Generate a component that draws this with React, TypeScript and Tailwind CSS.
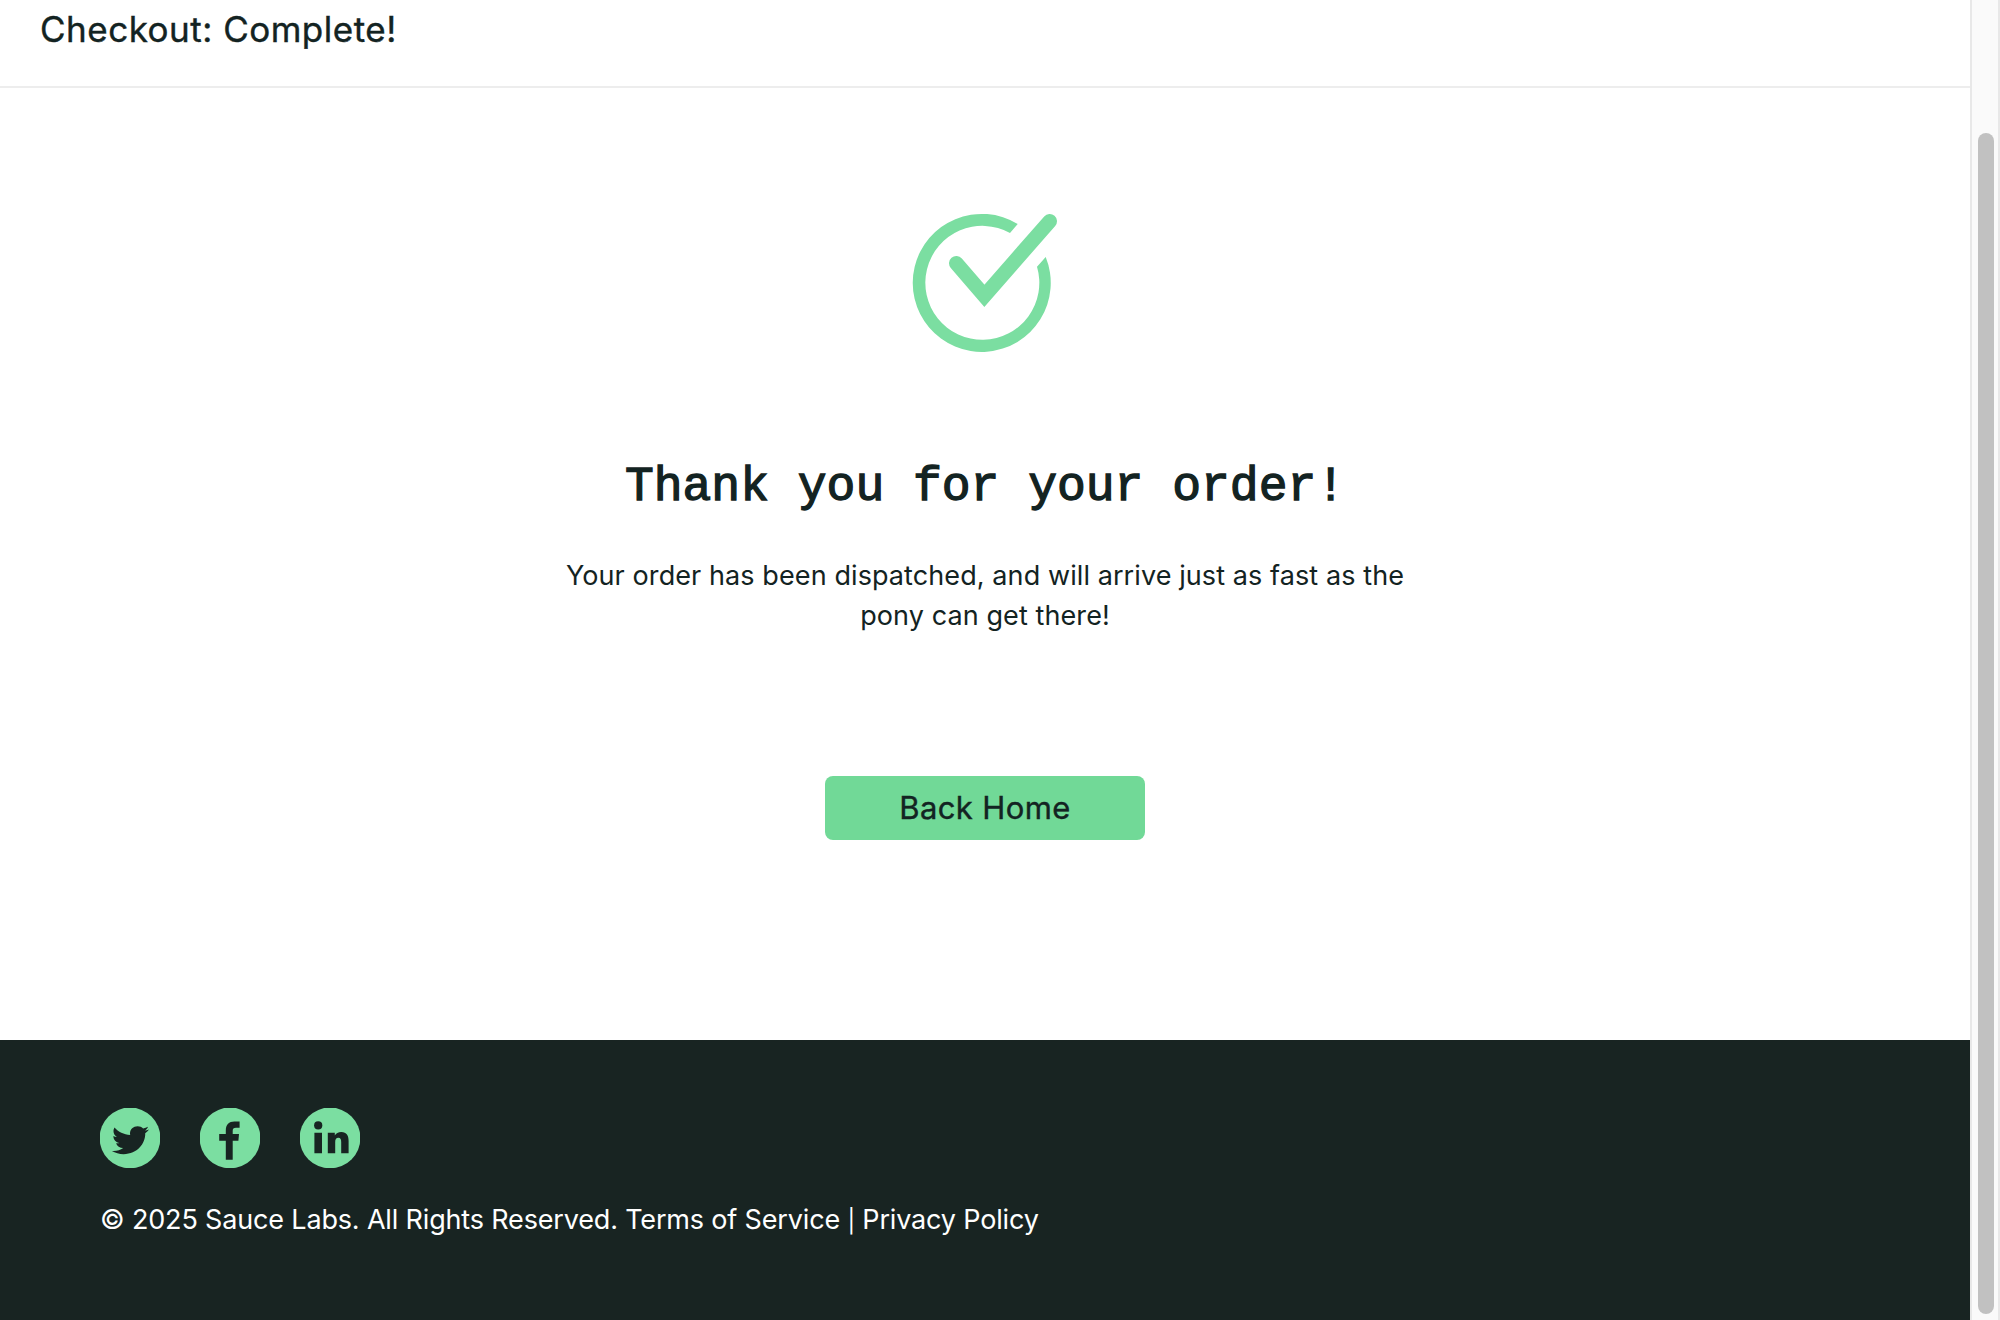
import type { ReactNode } from "react";

function OrderPlacedIcon() {
  return (
    <svg width="190" height="180" viewBox="0 0 190 180" className="block">
      <path fill="#7bdea1" d="M127.7 34A69 69 0 1 0 155.7 67L147 76.7A57 57 0 1 1 120 43Z" />
      <path
        d="M66.3 73.2L94.4 105.8L159.7 31.2"
        fill="none"
        stroke="#7bdea1"
        strokeWidth="14.6"
        strokeLinecap="round"
        strokeLinejoin="miter"
      />
    </svg>
  );
}

function SocialIcon({ label, children }: { label: string; children: ReactNode }) {
  return (
    <a aria-label={label} className="block size-[60px] overflow-hidden">
      <svg width="60" height="60" viewBox="0 0 60 60" className="block overflow-visible blur-[0.5px]">
        <circle cx="30" cy="30" r="30.4" fill="#7bdea1" />
        <g fill="#182422">{children}</g>
      </svg>
    </a>
  );
}

export default function App() {
  return (
    <div className="flex h-[1320px] w-[2000px] overflow-hidden bg-white font-['Inter',sans-serif] text-[#132322]">
      <div className="flex w-[1970px] shrink-0 flex-col">
        <header className="h-[88px] border-b-2 border-[#ededed] px-10 pt-[7px]">
          <span className="block text-[35px] leading-[44px] tracking-[0.5px] [-webkit-text-stroke:0.4px_#132322]">
            Checkout: Complete!
          </span>
        </header>
        <main className="flex h-[952px] flex-col items-center">
          <div className="mt-[102px]">
            <OrderPlacedIcon />
          </div>
          <h2 className="mt-[85px] font-['Liberation_Mono',monospace] text-[48px] leading-[64px] [-webkit-text-stroke:1.3px_#132322]">
            Thank you for your order!
          </h2>
          <p className="mt-[37px] text-center text-[27px] leading-[40px] tracking-[0.09px]">
            Your order has been dispatched, and will arrive just as fast as the
            <br />
            pony can get there!
          </p>
          <button className="mt-[140px] h-16 w-80 rounded-lg bg-[#71d997] text-[31px] tracking-[0.4px] [-webkit-text-stroke:0.4px_#132322]">
            Back Home
          </button>
        </main>
        <footer className="h-[280px] bg-[#182422] px-[100px] pt-[68px]">
          <div className="flex gap-10">
            <SocialIcon label="Twitter">
              <path
                transform="translate(11.9 18.2) scale(0.0725 0.0673) translate(0 -48)"
                d="M459.37 151.716c.325 4.548.325 9.097.325 13.645 0 138.72-105.583 298.558-298.558 298.558-59.452 0-114.68-17.219-161.137-47.106 8.447.974 16.568 1.299 25.34 1.299 49.055 0 94.213-16.568 130.274-44.832-46.132-.975-84.792-31.188-98.112-72.772 6.498.974 12.995 1.624 19.818 1.624 9.421 0 18.843-1.3 27.614-3.573-48.081-9.747-84.143-51.98-84.143-102.985v-1.299c13.969 7.797 30.214 12.67 47.431 13.319-28.264-18.843-46.781-51.005-46.781-87.391 0-19.492 5.197-37.36 14.294-52.954 51.655 63.675 129.3 105.258 216.365 109.807-1.624-7.797-2.599-15.918-2.599-24.04 0-57.828 46.782-104.934 104.934-104.934 30.213 0 57.502 12.67 76.67 33.137 23.715-4.548 46.456-13.32 66.599-25.34-7.798 24.366-24.366 44.833-46.132 57.827 21.117-2.273 41.584-8.122 60.426-16.243-14.292 20.791-32.161 39.308-52.628 54.253z"
              />
            </SocialIcon>
            <SocialIcon label="Facebook">
              <path d="M25.8 51.8V32.7H19.2V26H25.8V22.5C25.8 16.5 29 13.6 34.4 13.6H39.6V19.8H36C33.5 19.8 32.7 20.9 32.7 23V26H39L38.4 32.7H32.7V51.8Z" />
            </SocialIcon>
            <SocialIcon label="LinkedIn">
              <circle cx="18.2" cy="17.4" r="4.1" />
              <path d="M14.4 24.7H22V45.2H14.4ZM27.8 24.7H34.8V27.4C36.1 25.3 38.3 24 41.3 24C46.7 24 48.6 27.6 48.6 33V45.2H41.2V34.2C41.2 31.5 40.6 29.8 38.4 29.8C36 29.8 35.2 31.6 35.2 34.2V45.2H27.8Z" />
            </SocialIcon>
          </div>
          <div className="mt-8 text-[27px] leading-[40px] tracking-[-0.165px] text-white">
            © 2025 Sauce Labs. All Rights Reserved. Terms of Service <span className="text-[23px]">|</span> Privacy Policy
          </div>
        </footer>
      </div>
      <div className="flex w-[30px] border-x-2 border-[#e8e8e8] bg-[#fafafa] pt-[133px] pb-[6px] pl-[6px]">
        <div className="w-4 rounded-full bg-[#c1c1c1]" />
      </div>
    </div>
  );
}
